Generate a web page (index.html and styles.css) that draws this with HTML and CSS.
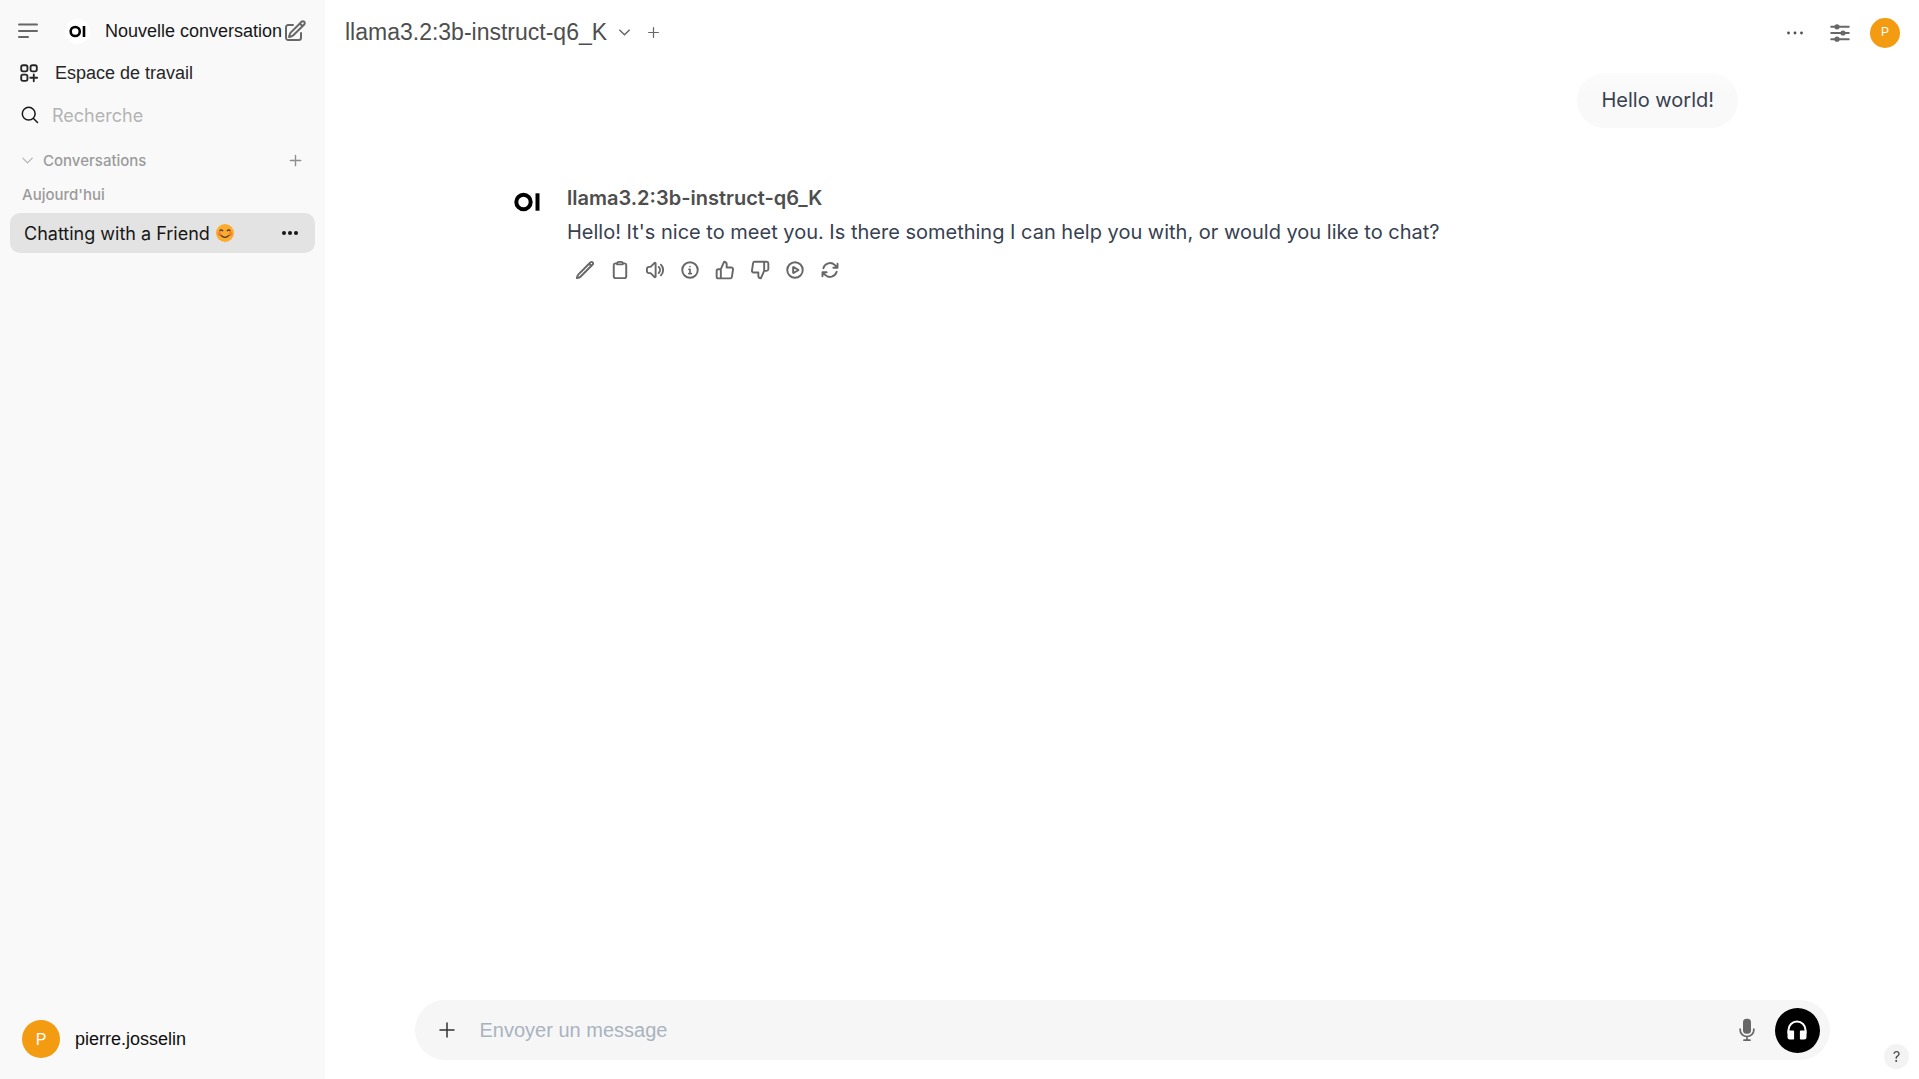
FILE: index.html
```html
<!DOCTYPE html>
<html lang="fr">
<head>
<meta charset="utf-8">
<meta name="viewport" content="width=device-width, initial-scale=1">
<title>Chatting with a Friend | Open WebUI</title>
<link rel="stylesheet" href="styles.css">
</head>
<body>
<div class="app">
  <aside class="sidebar">
    <div class="side-top">
      <button class="icon-btn menu-btn" type="button" aria-label="Menu">
        <svg class="i24 gray" viewBox="0 0 24 24" stroke-width="2"><path d="M3 5.500h18M3 12h18M3 18h9"/></svg>
      </button>
      <a class="new-chat" href="#">
        <span class="logo-badge"><svg class="logo-sm" viewBox="0 0 26 20"><circle cx="9.500" cy="10" r="7"/><path d="M23 1.500v17"/></svg></span>
        <span class="new-label">Nouvelle conversation</span>
        <svg class="i24 gray" viewBox="0 0 24 24" stroke-width="2"><path d="m16.862 4.487 1.687-1.688a1.875 1.875 0 1 1 2.652 2.652L10.582 16.070a4.500 4.500 0 0 1-1.897 1.130L6 18l.8-2.685a4.500 4.500 0 0 1 1.130-1.897l8.932-8.931Zm0 0L19.500 7.125M18 14v4.750A2.250 2.250 0 0 1 15.750 21H5.250A2.250 2.250 0 0 1 3 18.750V8.250A2.250 2.250 0 0 1 5.250 6H10"/></svg>
      </a>
    </div>
    <a class="workspace" href="#">
      <svg class="i22" viewBox="0 0 24 24" stroke-width="2"><rect x="3.500" y="3.500" width="6.800" height="6.800" rx="2"/><rect x="13.700" y="3.500" width="6.800" height="6.800" rx="2"/><rect x="3.500" y="13.700" width="6.800" height="6.800" rx="2"/><path d="M17.200 13.500v7.500M13.400 17.200h7.500"/></svg>
      <span>Espace de travail</span>
    </a>
    <label class="search">
      <svg class="i20" viewBox="0 0 20 20" stroke-width="1.500"><circle cx="8.700" cy="8.700" r="6.400"/><path d="m13.500 13.500 4 4"/></svg>
      <input type="search" placeholder="Recherche" aria-label="Recherche">
    </label>
    <div class="folder">
      <button class="folder-toggle" type="button">
        <svg class="i15 pale" viewBox="0 0 24 24" stroke-width="2"><path d="m19.500 8.250-7.500 7.500-7.500-7.500"/></svg>
        <span>Conversations</span>
      </button>
      <button class="icon-btn" type="button" aria-label="Ajouter">
        <svg class="i15 mid" viewBox="0 0 16 16" stroke-width="1.500"><path d="M8 2.500v11M2.500 8h11"/></svg>
      </button>
    </div>
    <h2 class="day">Aujourd'hui</h2>
    <div class="chat-item">
      <a href="#">Chatting with a Friend
        <svg class="emoji" viewBox="0 0 18 18" role="img" aria-label="Visage souriant"><circle cx="9" cy="9" r="9" fill="#fcab2d"/><circle cx="3.500" cy="10" r="1.900" fill="#f6802f"/><circle cx="14.500" cy="10" r="1.900" fill="#f6802f"/><path d="M3.800 6.800q1.500-2 3 0M11.200 6.800q1.500-2 3 0M5 11.300q4 4 8 0" fill="none" stroke="#493329" stroke-width="1.200" stroke-linecap="round"/></svg></a>
      <button class="icon-btn" type="button" aria-label="Options">
        <svg class="i20 dots" viewBox="0 0 20 20"><circle cx="4" cy="10" r="2"/><circle cx="10" cy="10" r="2"/><circle cx="16" cy="10" r="2"/></svg>
      </button>
    </div>
    <button class="user" type="button"><span class="avatar avatar-lg">P</span><span>pierre.josselin</span></button>
  </aside>

  <main class="main">
    <header class="topbar">
      <button class="model" type="button">
        <span>llama3.2:3b-instruct-q6_K</span>
        <svg class="i15 gray" viewBox="0 0 24 24" stroke-width="2.400"><path d="m19.500 8.250-7.500 7.500-7.500-7.500"/></svg>
      </button>
      <button class="icon-btn add-model" type="button" aria-label="Ajouter un modèle">
        <svg class="i15 gray" viewBox="0 0 16 16" stroke-width="1.300"><path d="M8 2.800v10.400M2.800 8h10.400"/></svg>
      </button>
      <div class="tools">
        <button class="icon-btn" type="button" aria-label="Plus">
          <svg class="i20 dots gray-fill" viewBox="0 0 20 20"><circle cx="3.500" cy="10" r="1.400"/><circle cx="10" cy="10" r="1.400"/><circle cx="16.500" cy="10" r="1.400"/></svg>
        </button>
        <button class="icon-btn" type="button" aria-label="Contrôles">
          <svg class="i20 gray" viewBox="0 0 20 20" stroke-width="1.900"><path d="M1.200 3.800h17.600M1.200 10h17.600M1.200 16.200h17.600"/><g fill="currentColor" stroke="none"><circle cx="7" cy="3.800" r="2.600"/><circle cx="13" cy="10" r="2.600"/><circle cx="7" cy="16.200" r="2.600"/></g></svg>
        </button>
        <button class="icon-btn" type="button" aria-label="Compte"><span class="avatar avatar-sm">P</span></button>
      </div>
    </header>

    <section class="messages">
      <p class="bubble">Hello world!</p>
      <article class="reply">
        <svg class="logo-lg" viewBox="0 0 26 20"><circle cx="9.500" cy="10" r="7.200"/><path d="M23.500 1.300v17.400"/></svg>
        <div class="reply-body">
          <h3>llama3.2:3b-instruct-q6_K</h3>
          <p>Hello! It's nice to meet you. Is there something I can help you with, or would you like to chat?</p>
          <div class="actions">
            <button class="icon-btn" type="button" aria-label="Modifier"><svg class="i20 gray" viewBox="0 0 24 24" stroke-width="2.300"><path d="M16.862 4.487l1.687-1.688a1.875 1.875 0 112.652 2.652L6.832 19.820a4.500 4.500 0 01-1.897 1.130l-2.685.8.8-2.685a4.500 4.500 0 011.130-1.897L16.863 4.487zm0 0L19.500 7.125"/></svg></button>
            <button class="icon-btn" type="button" aria-label="Copier"><svg class="i20 gray" viewBox="0 0 24 24" stroke-width="2.300"><path d="M15.666 3.888A2.250 2.250 0 0013.500 2.250h-3c-1.030 0-1.900.693-2.166 1.638m7.332 0c.055.194.084.4.084.612v0a.75.75 0 01-.75.75H9a.75.75 0 01-.75-.75v0c0-.212.030-.418.084-.612m7.332 0c.646.049 1.288.110 1.927.184 1.100.128 1.907 1.077 1.907 2.185V19.500a2.250 2.250 0 01-2.250 2.250H6.750A2.250 2.250 0 014.500 19.500V6.257c0-1.108.806-2.057 1.907-2.185a48.208 48.208 0 011.927-.184"/></svg></button>
            <button class="icon-btn" type="button" aria-label="Lire"><svg class="i20 gray" viewBox="0 0 24 24" stroke-width="2.300"><path d="M19.114 5.636a9 9 0 010 12.728M16.463 8.288a5.250 5.250 0 010 7.424M6.750 8.250l4.720-4.720a.75.75 0 011.280.530v15.880a.75.75 0 01-1.280.530l-4.720-4.720H4.510c-.880 0-1.704-.507-1.938-1.354A9.010 9.010 0 012.250 12c0-.830.112-1.633.322-2.396C2.806 8.756 3.630 8.250 4.510 8.250H6.750z"/></svg></button>
            <button class="icon-btn" type="button" aria-label="Informations"><svg class="i20 gray" viewBox="0 0 24 24" stroke-width="2.300"><circle cx="12" cy="12" r="9.300"/><path d="M10.700 11.200H12v5M10.500 16.300h3.200M12 7.800v.1" stroke-width="2"/></svg></button>
            <button class="icon-btn" type="button" aria-label="Bonne réponse"><svg class="i20 gray" viewBox="0 0 24 24" stroke-width="2.300"><path d="M14 9V5a3 3 0 0 0-3-3l-4 9v11h11.280a2 2 0 0 0 2-1.700l1.380-9a2 2 0 0 0-2-2.300zM7 22H4a2 2 0 0 1-2-2v-7a2 2 0 0 1 2-2h3"/></svg></button>
            <button class="icon-btn" type="button" aria-label="Mauvaise réponse"><svg class="i20 gray" viewBox="0 0 24 24" stroke-width="2.300"><path d="M10 15v4a3 3 0 0 0 3 3l4-9V2H5.720a2 2 0 0 0-2 1.700l-1.380 9a2 2 0 0 0 2 2.300zm7-13h2.670A2.310 2.310 0 0 1 22 4v7a2.310 2.310 0 0 1-2.330 2H17"/></svg></button>
            <button class="icon-btn" type="button" aria-label="Continuer"><svg class="i20 gray" viewBox="0 0 24 24" stroke-width="2.300"><circle cx="12" cy="12" r="9.300"/><path d="M15.910 11.672a.375.375 0 010 .656l-5.603 3.113a.375.375 0 01-.557-.328V8.887c0-.286.307-.466.557-.327l5.603 3.112z"/></svg></button>
            <button class="icon-btn" type="button" aria-label="Régénérer"><svg class="i20 gray" viewBox="0 0 24 24" stroke-width="2.300"><path d="M16.023 9.348h4.992v-.001M2.985 19.644v-4.992m0 0h4.992m-4.993 0l3.181 3.183a8.250 8.250 0 0013.803-3.700M4.031 9.865a8.250 8.250 0 0113.803-3.700l3.181 3.182m0-4.991v4.990"/></svg></button>
          </div>
        </div>
      </article>
    </section>

    <form class="composer">
      <button class="icon-btn attach" type="button" aria-label="Joindre"><svg class="i20" viewBox="0 0 20 20" stroke-width="1.500"><path d="M10 3v14M3 10h14"/></svg></button>
      <input type="text" placeholder="Envoyer un message" aria-label="Envoyer un message">
      <button class="icon-btn" type="button" aria-label="Dicter"><svg class="i24 gray" viewBox="0 0 24 24" stroke-width="1.700"><rect x="8" y=".8" width="8" height="15" rx="3.500" fill="currentColor" stroke="none"/><path d="M5.200 11v1.200a6.800 6.300 0 0 0 13.600 0V11M12 18.500v3.500M9 22.200h6"/></svg></button>
      <button class="call" type="button" aria-label="Appel"><svg class="i24" viewBox="0 0 24 24" stroke-width="2"><path d="M3.500 15v-3a8.500 8.500 0 0 1 17 0v3"/><path d="M2.500 12.500h5.800a.8.8 0 0 1 .8.8v7.400a.8.8 0 0 1-.8.8H5a2.500 2.500 0 0 1-2.500-2.500zM21.500 12.500h-5.800a.8.8 0 0 0-.8.8v7.400a.8.8 0 0 0 .8.8H19a2.500 2.500 0 0 0 2.500-2.500z" fill="currentColor" stroke="none"/></svg></button>
    </form>
  </main>
</div>
<button class="help" type="button" aria-label="Aide">?</button>
</body>
</html>
```
FILE: styles.css
```css
* { box-sizing: border-box; }

body {
  margin: 0;
  background: #fff;
  color: #171717;
  font-family: "Liberation Sans", Arial, sans-serif;
  font-size: 18px;
  line-height: 25px;
}

h2, h3, p { margin: 0; }
a { color: inherit; text-decoration: none; }

button, input {
  margin: 0;
  padding: 0;
  border: 0;
  background: none;
  color: inherit;
  font: inherit;
  outline: none;
}

button { cursor: pointer; }

svg {
  flex: none;
  display: block;
  fill: none;
  stroke: currentColor;
  stroke-linecap: round;
  stroke-linejoin: round;
}

.i15 { width: 15px; height: 15px; }
.i20 { width: 20px; height: 20px; }
.i22 { width: 22px; height: 22px; }
.i24 { width: 24px; height: 24px; }
.gray { color: #676767; }
.mid { color: #8f8f8f; }
.pale { color: #b4b4b4; }
.dots { fill: currentColor; stroke: none; }
.gray-fill { color: #4e4e4e; }

.icon-btn {
  display: flex;
  flex: none;
  align-items: center;
  justify-content: center;
}

.app { display: flex; min-height: 100vh; }

/* Sidebar */
.sidebar {
  display: flex;
  flex: none;
  flex-direction: column;
  width: 325px;
  padding: 10px;
  background: #f9f9f9;
}

.side-top {
  display: flex;
  align-items: center;
  gap: 25px;
  height: 42px;
  padding: 0 8px 0 6px;
}

.new-chat { display: flex; flex: 1; align-items: center; }
.new-label { flex: 1; margin-left: 15px; white-space: nowrap; }

.logo-badge {
  display: flex;
  align-items: center;
  justify-content: center;
  width: 25px;
  height: 25px;
  border-radius: 50%;
  background: #fff;
}

.logo-sm { width: 17px; height: 13px; color: #000; stroke-width: 4; stroke-linecap: butt; }

.workspace {
  display: flex;
  align-items: center;
  gap: 15px;
  height: 42px;
  padding-left: 8px;
  color: #262626;
}

.search {
  display: flex;
  align-items: center;
  gap: 12px;
  height: 42px;
  padding-left: 10px;
}

.search input { flex: 1; min-width: 0; font-family: Inter, sans-serif; }
.search input::placeholder { color: #b4b4b4; opacity: 1; }

.folder {
  display: flex;
  align-items: center;
  justify-content: space-between;
  height: 49px;
  padding: 0 12px 0 10px;
}

.folder-toggle, .day {
  color: #9b9b9b;
  font-family: Inter, sans-serif;
  font-size: 15px;
  font-weight: 500;
  line-height: 20px;
}

.folder-toggle { display: flex; align-items: center; gap: 8px; }
.day { padding: 0 12px 8px; }

.chat-item {
  display: flex;
  align-items: center;
  justify-content: space-between;
  height: 40px;
  padding: 0 15px 0 14px;
  border-radius: 10px;
  background: #e3e3e3;
  font-family: Inter, sans-serif;
}

.chat-item a { display: flex; align-items: center; gap: 6px; white-space: nowrap; }
.emoji { width: 18px; height: 18px; stroke: none; }

.user {
  display: flex;
  align-items: center;
  gap: 15px;
  margin-top: auto;
  padding: 11px 12px;
  color: #0d0d0d;
}

.avatar {
  display: flex;
  align-items: center;
  justify-content: center;
  border-radius: 50%;
  background: #f39c12;
  color: #fff;
}

.avatar-lg { width: 38px; height: 38px; font-size: 16px; }
.avatar-sm { width: 30px; height: 30px; font-size: 12px; }

/* Conversation */
.main { display: flex; flex: 1; flex-direction: column; min-width: 0; }

.topbar {
  display: flex;
  align-items: center;
  height: 65px;
  padding: 0 19px 0 20px;
}

.model {
  display: flex;
  align-items: center;
  gap: 10px;
  color: #4e4e4e;
  font-size: 23px;
}

.add-model { margin-left: 14px; }
.tools { display: flex; align-items: center; gap: 15px; margin-left: auto; }
.tools .icon-btn { width: 30px; height: 30px; }

.messages {
  display: flex;
  flex: 1;
  flex-direction: column;
  width: 100%;
  max-width: 1280px;
  margin: 0 auto;
  padding: 8px 24px;
  color: #374151;
  font-family: Inter, sans-serif;
  font-size: 20px;
  line-height: 35px;
}

.bubble {
  align-self: flex-end;
  padding: 10px 24px;
  border-radius: 28px;
  background: linear-gradient(#fcfcfc, #f9f9f9 40%);
}

.reply { display: flex; gap: 27px; margin-top: 53px; padding-left: 8px; }
.logo-lg { width: 26px; height: 20px; margin-top: 11px; color: #000; stroke-width: 4; stroke-linecap: butt; }
.reply h3 { color: #4e4e4e; font-size: 20px; font-weight: 600; line-height: 34px; }
.actions { display: flex; gap: 15px; padding: 10px 8px; }

.composer {
  display: flex;
  align-items: center;
  gap: 23px;
  width: calc(100% - 40px);
  max-width: 1415px;
  height: 60px;
  margin: 0 auto 19px;
  padding: 0 10px 0 22px;
  border-radius: 30px;
  background: #f6f6f6;
}

.attach { color: #333; }
.composer input { flex: 1; min-width: 0; font-size: 20px; }
.composer input::placeholder { color: #a9b3c0; opacity: 1; }

.call {
  display: flex;
  flex: none;
  align-items: center;
  justify-content: center;
  width: 45px;
  height: 45px;
  margin-left: -7px;
  border-radius: 50%;
  background: #000;
  color: #fff;
}

.help {
  position: fixed;
  right: 10px;
  bottom: 10px;
  width: 25px;
  height: 25px;
  border-radius: 50%;
  background: #f3f3f3;
  color: #4e4e4e;
  font-family: Inter, sans-serif;
  font-size: 15px;
}
```
